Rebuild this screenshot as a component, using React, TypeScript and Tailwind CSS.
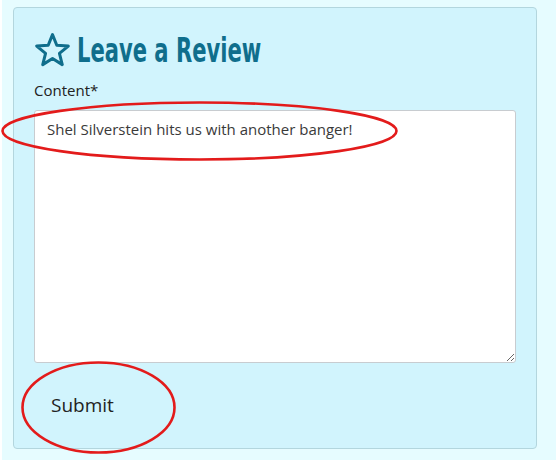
import React from "react";

export default function App() {
  return (
    <div className="relative w-[556px] h-[462px] bg-white overflow-hidden">
      <div className="ml-[2px] w-[554px] h-[460px] bg-[#e6fcff] pt-[7px] pl-[11px]">
        <div className="w-[524px] h-[442px] bg-[#d1f4fd] border border-[#b3d6de] rounded-[4px] pt-[25px] px-[20px] flex flex-col">
          <div className="flex items-center gap-[7px] h-[34px] ml-[1px]">
            <svg width="35" height="34" viewBox="0 0 35 34" className="shrink-0">
              <polygon
                points="17.5,1.6 21.79,12.29 33.29,13.07 24.44,20.46 27.26,31.63 17.5,25.5 7.74,31.63 10.56,20.46 1.71,13.07 13.21,12.29"
                fill="none"
                stroke="#0f6e8c"
                strokeWidth="3"
                strokeLinejoin="round"
              />
            </svg>
            <h2
              className="inline-block origin-left scale-x-[0.62] whitespace-nowrap text-[34px] font-bold text-[#0f6e8c] leading-none"
              style={{ fontFamily: '"DejaVu Sans", sans-serif' }}
            >
              Leave a Review
            </h2>
          </div>
          <label
            className="mt-[13px] text-[15px] text-[#222] leading-[20px]"
            style={{ fontFamily: '"Open Sans", "Noto Sans", sans-serif' }}
          >
            Content*
          </label>
          <textarea
            className="mt-[10px] w-[482px] h-[253px] bg-white border border-[#c8ccd0] rounded-[3px] px-[12px] py-[7px] text-[15px] text-[#3a3a3a] leading-[22px] resize-y outline-none"
            style={{ fontFamily: '"Open Sans", "Noto Sans", sans-serif' }}
            defaultValue="Shel Silverstein hits us with another banger!"
          />
          <button
            className="mt-[30px] self-start ml-[17px] text-[19px] text-[#222] leading-[24px] bg-transparent"
            style={{ fontFamily: '"Open Sans", "Noto Sans", sans-serif' }}
          >
            Submit
          </button>
        </div>
      </div>
      <svg className="absolute left-0 top-0 pointer-events-none" width="556" height="462">
        <ellipse cx="199.5" cy="131" rx="197" ry="28.5" fill="none" stroke="#e31b1b" strokeWidth="2.6" />
        <ellipse cx="98.5" cy="407.5" rx="76" ry="45" fill="none" stroke="#e31b1b" strokeWidth="2.6" />
      </svg>
    </div>
  );
}
